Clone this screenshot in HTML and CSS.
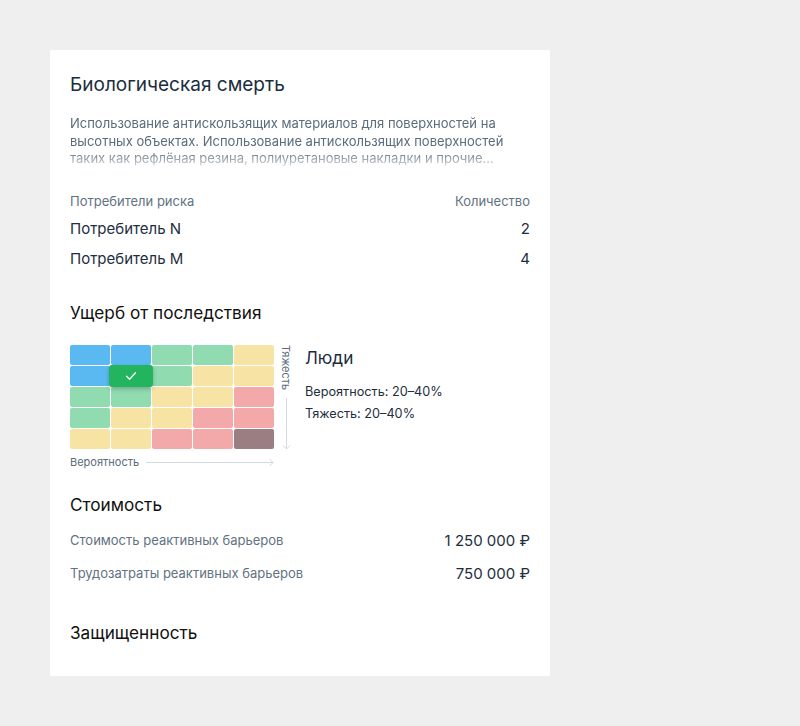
FILE: index.html
```html
<!DOCTYPE html>
<html lang="ru">
<head>
<meta charset="utf-8">
<link rel="stylesheet" href="styles.css">
</head>
<body>
<div class="card">
  <h1 class="title">Биологическая смерть</h1>
  <p class="desc">Использование антискользящих материалов для поверхностей на высотных объектах. Использование антискользящих поверхностей таких как рефлёная резина, полиуретановые накладки и прочие…</p>

  <div class="table">
    <div class="row head"><span>Потребители риска</span><span>Количество</span></div>
    <div class="row item"><span>Потребитель N</span><span>2</span></div>
    <div class="row item"><span>Потребитель M</span><span>4</span></div>
  </div>

  <h2 class="section">Ущерб от последствия</h2>
  <div class="damage">
    <div class="matrix-wrap">
      <div class="matrix-top">
        <div class="matrix">
          <div class="cell b"></div><div class="cell b"></div><div class="cell g"></div><div class="cell g"></div><div class="cell y"></div>
          <div class="cell b"></div><div class="cell g sel"><div class="checked"><svg width="12" height="10" viewBox="0 0 12 10"><path d="M1.5 5.2 L4.6 8.2 L10.5 1.8" fill="none" stroke="#fff" stroke-width="1.3" stroke-linecap="round" stroke-linejoin="round"/></svg></div></div><div class="cell g"></div><div class="cell y"></div><div class="cell y"></div>
          <div class="cell g"></div><div class="cell g"></div><div class="cell y"></div><div class="cell y"></div><div class="cell r"></div>
          <div class="cell g"></div><div class="cell y"></div><div class="cell y"></div><div class="cell r"></div><div class="cell r"></div>
          <div class="cell y"></div><div class="cell y"></div><div class="cell r"></div><div class="cell r"></div><div class="cell d"></div>
        </div>
        <div class="axis-v">
          <span class="axis-v-label">Тяжесть</span>
          <svg class="arrow-v" width="9" height="52" viewBox="0 0 9 52"><path d="M4.5 0 V51 M1 47.5 L4.5 51 L8 47.5" fill="none" stroke="#d3dae1" stroke-width="1"/></svg>
        </div>
      </div>
      <div class="axis-h">
        <span class="axis-h-label">Вероятность</span>
        <svg class="arrow-h" width="128" height="9" viewBox="0 0 128 9"><path d="M0 4.5 H127 M123.5 1 L127 4.5 L123.5 8" fill="none" stroke="#d3dae1" stroke-width="1"/></svg>
      </div>
    </div>
    <div class="legend">
      <div class="legend-title">Люди</div>
      <div class="legend-line">Вероятность: 20–40%</div>
      <div class="legend-line">Тяжесть: 20–40%</div>
    </div>
  </div>

  <h2 class="section cost-title">Стоимость</h2>
  <div class="costs">
    <div class="cost"><span class="cost-label">Стоимость реактивных барьеров</span><span class="cost-value">1 250 000 ₽</span></div>
    <div class="cost"><span class="cost-label">Трудозатраты реактивных барьеров</span><span class="cost-value">750 000 ₽</span></div>
  </div>

  <h2 class="section protect-title">Защищенность</h2>
</div>
</body>
</html>
```

FILE: styles.css
```css
html, body {
  margin: 0;
  padding: 0;
  background: #efefef;
}
body {
  padding: 50px;
  font-family: Inter, "Noto Sans", sans-serif;
  color: #1b2b3a;
}
.card {
  width: 460px;
  height: 586px;
  background: #fff;
  padding: 20px 20px 20px 20px;
}
.title {
  margin: 0;
  padding-top: 4px;
  font-size: 19px;
  line-height: 22px;
  font-weight: 400;
  color: #1a2d3e;
}
.desc {
  margin: 19px 0 0;
  font-size: 13px;
  line-height: 17.5px;
  color: #5b6c7b;
  width: 440px;
  -webkit-mask-image: linear-gradient(to bottom, #000 0, #000 36px, rgba(0,0,0,0.22) 52px);
  mask-image: linear-gradient(to bottom, #000 0, #000 36px, rgba(0,0,0,0.22) 52px);
}
.table {
  margin-top: 24px;
}
.row {
  display: flex;
  justify-content: space-between;
}
.row.head {
  font-size: 13px;
  line-height: 18px;
  color: #627282;
}
.row.item {
  font-size: 15px;
  line-height: 20px;
  margin-top: 9px;
  color: #1d2e3e;
}
.row.item + .row.item {
  margin-top: 10px;
}
.section {
  margin: 0;
  font-size: 17.2px;
  line-height: 22px;
  font-weight: 400;
  color: #111;
}
.table + .section {
  margin-top: 33px;
}
.damage {
  display: flex;
  margin-top: 21px;
}
.matrix-wrap {
  width: 215px;
}
.matrix-top {
  display: flex;
}
.matrix {
  display: grid;
  grid-template-columns: repeat(5, 40px);
  grid-template-rows: repeat(5, 20px);
  gap: 1px;
}
.cell {
  border-radius: 2px;
  position: relative;
}
.cell.b { background: #5bb9f1; }
.cell.g { background: #90dbb0; }
.cell.y { background: #f7e4a4; }
.cell.r { background: #f3a9aa; }
.cell.d { background: #9a7e82; }
.checked {
  position: absolute;
  left: -2px;
  top: -1px;
  width: 44px;
  height: 22px;
  background: #23b45f;
  border-radius: 3px;
  box-shadow: 0 2px 4px rgba(0,0,0,0.22);
  display: flex;
  align-items: center;
  justify-content: center;
  z-index: 2;
}
.axis-v {
  display: flex;
  flex-direction: column;
  align-items: center;
  margin-left: 6px;
  width: 12px;
}
.axis-v-label {
  writing-mode: vertical-rl;
  font-size: 11px;
  line-height: 12px;
  color: #5b6c7b;
  height: 48px;
}
.arrow-v {
  margin-top: 5px;
}
.axis-h {
  display: flex;
  align-items: center;
  margin-top: 6px;
}
.axis-h-label {
  font-size: 11px;
  line-height: 13px;
  color: #5b6c7b;
  margin-right: 7px;
}
.legend {
  margin-left: 20px;
  padding-top: 2px;
}
.legend-title {
  font-size: 17.2px;
  line-height: 22px;
  color: #1a2d3e;
}
.legend-line {
  font-size: 12.7px;
  line-height: 16px;
  color: #1d2e3e;
  margin-top: 15px;
}
.legend-line + .legend-line {
  margin-top: 6px;
}
.cost-title {
  margin-top: 25px;
}
.costs {
  margin-top: 14px;
}
.cost {
  display: flex;
  justify-content: space-between;
  align-items: center;
  height: 22px;
}
.cost + .cost {
  margin-top: 11px;
}
.cost-label {
  font-size: 13px;
  color: #627282;
  position: relative;
  top: -1px;
}
.cost-value {
  font-size: 15px;
  color: #1d2e3e;
}
.protect-title {
  margin-top: 37px;
}
```
